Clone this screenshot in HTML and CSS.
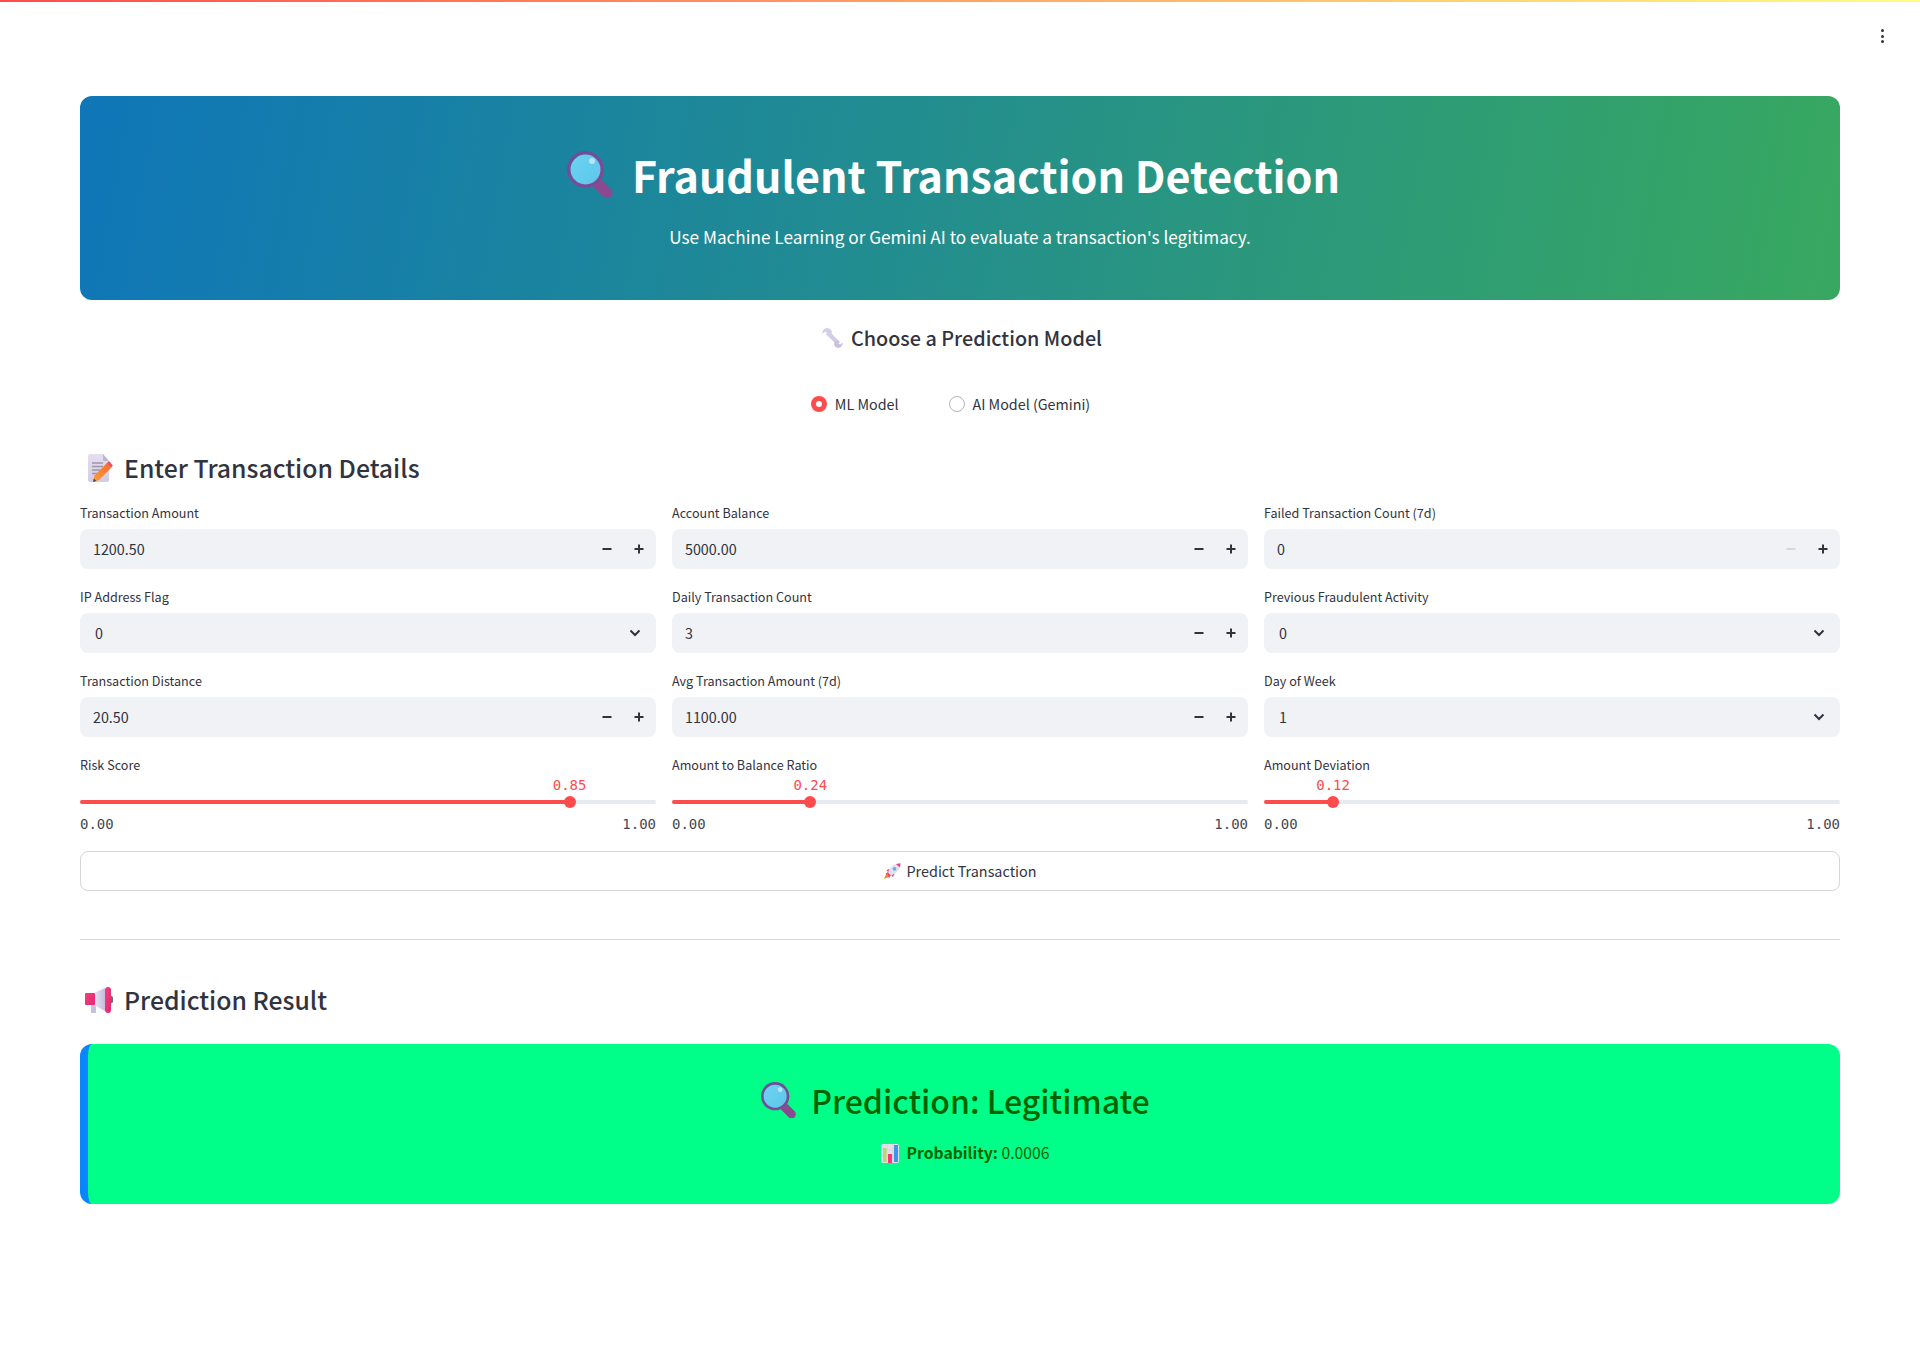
FILE: index.html
```html
<!DOCTYPE html>
<html lang="en">
<head>
<meta charset="utf-8">
<title>Fraudulent Transaction Detection</title>
<link rel="stylesheet" href="styles.css">
</head>
<body>
<svg class="sprite" aria-hidden="true">
  <defs>
    <linearGradient id="lens" x1="0" y1="0" x2="1" y2="1"><stop offset="0" stop-color="#6dd3f2"/><stop offset="1" stop-color="#5cc6ea"/></linearGradient>
    <linearGradient id="ring" x1="0" y1="0" x2="1" y2="1"><stop offset="0" stop-color="#6a4f9c"/><stop offset="1" stop-color="#7f4a94"/></linearGradient>
    <linearGradient id="paper" x1="0" y1="0" x2="0" y2="1"><stop offset="0" stop-color="#e4dfee"/><stop offset="1" stop-color="#d3cce2"/></linearGradient>
    <linearGradient id="pencil" x1="0" y1="1" x2="1" y2="0"><stop offset="0" stop-color="#f9a03a"/><stop offset="1" stop-color="#f76b2e"/></linearGradient>
    <linearGradient id="horn" x1="0" y1="0" x2="1" y2="0"><stop offset="0" stop-color="#e9e5f1"/><stop offset="1" stop-color="#c6bcdb"/></linearGradient>
    <linearGradient id="pink" x1="0" y1="0" x2="1" y2="1"><stop offset="0" stop-color="#f43f7f"/><stop offset="1" stop-color="#e8266c"/></linearGradient>
    <symbol id="i-magnifier" viewBox="0 0 47 47">
      <path d="M30 32 L40 42" stroke="#8a4a8f" stroke-width="11" stroke-linecap="round"/>
      <circle cx="18.500" cy="18.500" r="18.500" fill="url(#ring)"/>
      <circle cx="18.500" cy="18.500" r="15" fill="url(#lens)"/>
      <circle cx="25" cy="10" r="3" fill="#b9e6f5"/>
    </symbol>
    <symbol id="i-wrench" viewBox="0 0 21 20">
      <path d="M5.500 4.500 L16.500 15.500" stroke="#d4cde6" stroke-width="4.500"/>
      <path d="M6.500 .3 A5 5 0 0 0 .3 5.800 L3.300 3.800 L5.500 5.300 L5 8.300 A5 5 0 0 0 10 3.500 A5 5 0 0 0 6.500 .3Z" fill="#d4cde6"/>
      <path d="M15 19.700 A4.800 4.800 0 0 0 20.700 14.800 L18 16.500 L16 15.300 L16.300 12.300 A4.800 4.800 0 0 0 12 16.500 A4.800 4.800 0 0 0 15 19.700Z" fill="#c8c0dc"/>
    </symbol>
    <symbol id="i-doc" viewBox="0 0 25 28">
      <path d="M2 0 H15 L21 7 V26 Q21 28 19 28 H2 Q0 28 0 26 V2 Q0 0 2 0Z" fill="url(#paper)"/>
      <path d="M15 0 L21 7 H16 Q15 7 15 6Z" fill="#bdb4d2"/>
      <path d="M4 9 H15 M4 12.500 H15 M4 16 H12 M4 19.500 H9" stroke="#9e95ae" stroke-width="1.300"/>
      <path d="M5 28 L6.500 21.500 L18.500 9.500 L23 14 L11 26Z" fill="url(#pencil)"/>
      <path d="M18.500 9.500 L20.500 7.500 Q21 7 21.500 7.500 L24.500 11 Q25 11.500 24.500 12 L23 14Z" fill="#f4505a"/>
      <path d="M5 28 L5.800 24.500 L8.500 27Z" fill="#5b3a6e"/>
    </symbol>
    <symbol id="i-megaphone" viewBox="0 0 28 26">
      <rect x="6" y="17" width="5" height="9" fill="#c9bfdd"/>
      <path d="M9 6 L20 1 V24 L9 18Z" fill="url(#horn)"/>
      <rect x="0" y="6" width="10" height="12" rx="1" fill="url(#pink)"/>
      <rect x="25" y="9" width="3" height="7" rx="1.500" fill="#6b6a85"/>
      <rect x="20" y="0" width="6" height="26" rx="3" fill="url(#pink)"/>
    </symbol>
    <symbol id="i-rocket" viewBox="0 0 17 16">
      <path d="M2.500 10 L0 16 L6 13.500Z" fill="#f98a2c"/>
      <path d="M2.500 7 L7 5.500 L11 9.500 L9 14 L7 12 L5 15 L4 11.500 L1.500 11 L4 9Z" fill="#f2397a"/>
      <path d="M4 9.500 C5.500 4 10 .8 16 .8 C16 6.500 13 10.500 7 12.500Z" fill="#e5e0ef"/>
      <path d="M12 1 L16.500 .2 L16 4.500Z" fill="#f2397a"/>
      <circle cx="10.500" cy="5.800" r="1.900" fill="#5cb5e8"/>
    </symbol>
    <symbol id="i-chart" viewBox="0 0 18 19">
      <rect width="18" height="19" rx="2" fill="#e3dfec"/>
      <path d="M6 0 V19 M12 0 V19 M0 6 H18 M0 12 H18" stroke="#d0ccd9" stroke-width=".6"/>
      <rect x="2" y="4" width="3.500" height="14" fill="#b5dc6a"/>
      <rect x="7" y="10" width="4" height="9" fill="#f2397a"/>
      <rect x="13" y="1" width="4" height="17" fill="#3c96ea"/>
    </symbol>
    <symbol id="i-chevron" viewBox="0 0 12 8">
      <path d="M1.500 1.500 L6 6 L10.500 1.500" fill="none" stroke="#31333f" stroke-width="2"/>
    </symbol>
    <symbol id="i-minus" viewBox="0 0 10 10">
      <rect y="4" width="9" height="2" x=".5" fill="currentColor"/>
    </symbol>
    <symbol id="i-plus" viewBox="0 0 10 10">
      <path d="M.5 4 H4 V.5 H6 V4 H9.500 V6 H6 V9.500 H4 V6 H.5Z" fill="currentColor"/>
    </symbol>
  </defs>
</svg>

<div class="topline"></div>
<button class="menu" aria-label="Menu"><span class="dot"></span><span class="dot"></span><span class="dot"></span></button>

<main class="page">
  <header class="hero">
    <h1 class="hero-title"><svg class="ic-hero"><use href="#i-magnifier"/></svg>Fraudulent Transaction Detection</h1>
    <p class="hero-sub">Use Machine Learning or Gemini AI to evaluate a transaction's legitimacy.</p>
  </header>

  <h4 class="model-title"><svg class="ic-wrench"><use href="#i-wrench"/></svg>Choose a Prediction Model</h4>

  <div class="radios">
    <label class="radio"><span class="dot-on"></span>ML Model</label>
    <label class="radio"><span class="dot-off"></span>AI Model (Gemini)</label>
  </div>

  <h3 class="section first"><svg class="ic-doc"><use href="#i-doc"/></svg>Enter Transaction Details</h3>

  <div class="grid">
    <div class="field"><div class="label">Transaction Amount</div>
      <div class="box"><span class="val">1200.50</span><span class="steps"><svg class="step"><use href="#i-minus"/></svg><svg class="step"><use href="#i-plus"/></svg></span></div></div>
    <div class="field"><div class="label">Account Balance</div>
      <div class="box"><span class="val">5000.00</span><span class="steps"><svg class="step"><use href="#i-minus"/></svg><svg class="step"><use href="#i-plus"/></svg></span></div></div>
    <div class="field"><div class="label">Failed Transaction Count (7d)</div>
      <div class="box"><span class="val">0</span><span class="steps"><svg class="step off"><use href="#i-minus"/></svg><svg class="step"><use href="#i-plus"/></svg></span></div></div>

    <div class="field"><div class="label">IP Address Flag</div>
      <div class="box select"><span class="val">0</span><svg class="chev"><use href="#i-chevron"/></svg></div></div>
    <div class="field"><div class="label">Daily Transaction Count</div>
      <div class="box"><span class="val">3</span><span class="steps"><svg class="step"><use href="#i-minus"/></svg><svg class="step"><use href="#i-plus"/></svg></span></div></div>
    <div class="field"><div class="label">Previous Fraudulent Activity</div>
      <div class="box select"><span class="val">0</span><svg class="chev"><use href="#i-chevron"/></svg></div></div>

    <div class="field"><div class="label">Transaction Distance</div>
      <div class="box"><span class="val">20.50</span><span class="steps"><svg class="step"><use href="#i-minus"/></svg><svg class="step"><use href="#i-plus"/></svg></span></div></div>
    <div class="field"><div class="label">Avg Transaction Amount (7d)</div>
      <div class="box"><span class="val">1100.00</span><span class="steps"><svg class="step"><use href="#i-minus"/></svg><svg class="step"><use href="#i-plus"/></svg></span></div></div>
    <div class="field"><div class="label">Day of Week</div>
      <div class="box select"><span class="val">1</span><svg class="chev"><use href="#i-chevron"/></svg></div></div>

    <div class="field"><div class="label">Risk Score</div>
      <div class="slider"><div class="track"><div class="fill" style="width:85%"></div><span class="thumb" style="left:85%"></span><span class="bubble" style="left:85%">0.85</span></div>
      <div class="ends"><span>0.00</span><span>1.00</span></div></div></div>
    <div class="field"><div class="label">Amount to Balance Ratio</div>
      <div class="slider"><div class="track"><div class="fill" style="width:24%"></div><span class="thumb" style="left:24%"></span><span class="bubble" style="left:24%">0.24</span></div>
      <div class="ends"><span>0.00</span><span>1.00</span></div></div></div>
    <div class="field"><div class="label">Amount Deviation</div>
      <div class="slider"><div class="track"><div class="fill" style="width:12%"></div><span class="thumb" style="left:12%"></span><span class="bubble" style="left:12%">0.12</span></div>
      <div class="ends"><span>0.00</span><span>1.00</span></div></div></div>
  </div>

  <button class="predict"><svg class="ic-rocket"><use href="#i-rocket"/></svg>Predict Transaction</button>

  <hr class="rule">

  <h3 class="section"><svg class="ic-mega"><use href="#i-megaphone"/></svg>Prediction Result</h3>

  <section class="result">
    <h2 class="result-title"><svg class="ic-mag2"><use href="#i-magnifier"/></svg>Prediction: Legitimate</h2>
    <p class="result-prob"><svg class="ic-chart"><use href="#i-chart"/></svg><strong>Probability:</strong>&nbsp;0.0006</p>
  </section>
</main>
</body>
</html>
```

FILE: styles.css
```css
* { box-sizing: border-box; }
html, body { margin: 0; padding: 0; }
body {
  background: #fff;
  color: #31333f;
  font-family: "Noto Sans CJK SC", "Noto Sans", sans-serif;
  font-size: 14.400px;
  min-height: 1348px;
}
.sprite { width: 0; height: 0; overflow: hidden; display: block; }

.topline { height: 2px; background: linear-gradient(90deg, #ff4b4b, #fffd80); }

.menu {
  position: absolute; top: 29px; right: 32px;
  width: 12px; height: 14px; padding: 0; border: 0; background: none;
  display: flex; flex-direction: column; align-items: center; justify-content: space-between;
}
.dot { width: 3px; height: 3px; border-radius: 50%; background: #31333f; }

.page { padding: 94px 80px 0; }

.hero {
  height: 204px; border-radius: 12px; color: #fff; text-align: center;
  background: linear-gradient(100deg, #0f76b8, #38a860);
  padding-top: 50px;
}
.hero-title {
  margin: 0; padding-right: 13px; font-size: 43px; line-height: 56px; font-weight: 700;
  display: flex; justify-content: center; align-items: center;
}
.ic-hero { width: 47px; height: 47px; margin-right: 18px; flex: none; }
.hero-sub { margin: 20px 0 0; font-size: 17.200px; line-height: 30px; }

.model-title {
  margin: 20px 0 0; font-size: 19.800px; line-height: 35px; padding-bottom: 1px; font-weight: 500;
  display: flex; justify-content: center; align-items: center; padding-left: 4px;
}
.ic-wrench { width: 21px; height: 20px; margin-right: 8px; flex: none; }

.radios { margin-top: 40px; display: flex; justify-content: center; gap: 50px; padding-right: 19px; }
.radio { display: flex; align-items: center; gap: 8px; font-size: 14.300px; line-height: 16px; }
.dot-on { width: 16px; height: 16px; border-radius: 50%; background: #fff; border: 5px solid #ff4b4b; }
.dot-off { width: 16px; height: 16px; border-radius: 50%; background: #fff; border: 1px solid #b3b3ba; }

.section {
  margin: 40px 0 0; font-size: 24.800px; line-height: 38px; padding-bottom: 2px; font-weight: 500;
  display: flex; align-items: center;
}
.section.first { margin: 36px 0 13px; }
.ic-doc { width: 25px; height: 28px; margin: 2px 11px 0 8px; flex: none; }
.ic-mega { width: 28px; height: 26px; margin: 2px 11px 0 5px; flex: none; }

.grid { display: grid; grid-template-columns: repeat(3, 1fr); gap: 16px; }
.label { font-size: 12.600px; line-height: 24px; height: 28px; }
.box {
  height: 40px; background: #f0f2f6; border-radius: 8px;
  display: flex; align-items: center; justify-content: space-between;
  padding: 0 12px 0 13px; font-size: 14.300px;
}
.box.select { padding: 0 15px 0 15px; }
.val { line-height: 24px; }
.steps { display: flex; gap: 22px; }
.step { width: 10px; height: 10px; color: #31333f; }
.step.off { color: #d5d8de; }
.chev { width: 12px; height: 8px; }

.slider { height: 54px; padding-top: 19px; }
.track { position: relative; height: 4px; background: #e6eaf1; border-radius: 2px; }
.fill { height: 4px; background: #ff4b4b; border-radius: 2px; }
.thumb {
  position: absolute; top: -4px; width: 12px; height: 12px; margin-left: -6px;
  border-radius: 50%; background: #ff4b4b;
}
.bubble {
  position: absolute; top: -23px; transform: translateX(-50%);
  font-family: "DejaVu Sans Mono", monospace; font-size: 14px; line-height: 16px; color: #ff4b4b;
}
.ends {
  margin-top: 12px; display: flex; justify-content: space-between;
  font-family: "DejaVu Sans Mono", monospace; font-size: 14px; line-height: 16px; color: #454752;
}

.predict {
  display: flex; align-items: center; justify-content: center;
  width: 100%; height: 40px; margin-top: 16px; padding: 0 0 1px 1px;
  background: #fff; color: #31333f; border: 1px solid #d5d6da; border-radius: 8px;
  font-family: inherit; font-size: 14.400px;
}
.ic-rocket { width: 17px; height: 16px; margin-right: 5px; flex: none; }

.rule { margin: 48px 0 0; height: 1px; border: 0; background: #d9d9dc; }

.result {
  height: 160px; margin-top: 24px; padding-top: 34px; text-align: center;
  background: #00ff88; color: #006400; border-left: 8px solid #0a84ff; border-radius: 12px;
}
.result-title {
  margin: 0; padding-right: 17px; font-size: 32px; line-height: 44px; font-weight: 500;
  display: flex; justify-content: center; align-items: center;
}
.ic-mag2 { width: 36px; height: 36px; margin-right: 14px; flex: none; }
.result-prob {
  margin: 19px 0 0; padding-left: 2px; font-size: 15.700px; line-height: 24px;
  display: flex; justify-content: center; align-items: center;
}
.ic-chart { width: 18px; height: 19px; margin-right: 8px; flex: none; }
.result-prob strong { font-weight: 700; }
```
